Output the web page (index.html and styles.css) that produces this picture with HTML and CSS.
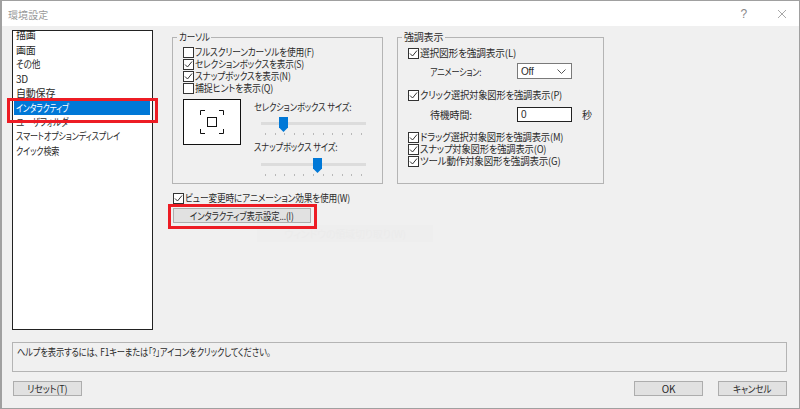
FILE: index.html
```html
<!DOCTYPE html>
<html lang="ja">
<head>
<meta charset="utf-8">
<title>環境設定</title>
<link rel="stylesheet" href="styles.css">
</head>
<body>
<div class="window">
  <header class="titlebar">
    <span class="title">環境設定</span>
    <span class="help-q">?</span>
    <svg class="close" width="10" height="10" viewBox="0 0 10 10"><path d="M1 1L9 9M9 1L1 9" stroke="#a8a8a8" fill="none"/></svg>
  </header>
  <div class="body">
    <div class="main">
      <ul class="list">
        <li class="item first">描画</li>
        <li class="item">画面</li>
        <li class="item"><span class="t sx86">その他</span></li>
        <li class="item">3D</li>
        <li class="item">自動保存</li>
        <li class="item selected"><span class="t sx78">インタラクティブ</span></li>
        <li class="item"><span class="t sx84">ユーザフォルダ</span></li>
        <li class="item"><span class="t sx81">スマートオプションディスプレイ</span></li>
        <li class="item"><span class="t sx81">クイック検索</span></li>
      </ul>
      <div class="pane">
        <div class="groups">
          <section class="group group-cursor">
            <div class="legend"><span class="t sx86">カーソル</span></div>
            <div class="checks">
              <label class="check"><span class="box"></span><span class="t sx87">フルスクリーンカーソルを使用(F)</span></label>
              <label class="check"><span class="box on"><svg width="9" height="9" viewBox="0 0 9 9"><path d="M1 4.5L3.5 7L8 1.5" fill="none" stroke="#333"/></svg></span><span class="t sx86">セレクションボックスを表示(S)</span></label>
              <label class="check"><span class="box on"><svg width="9" height="9" viewBox="0 0 9 9"><path d="M1 4.5L3.5 7L8 1.5" fill="none" stroke="#333"/></svg></span><span class="t sx86">スナップボックスを表示(N)</span></label>
              <label class="check"><span class="box"></span><span class="t sx90">捕捉ヒントを表示(Q)</span></label>
            </div>
            <div class="cursor-row">
              <div class="preview">
                <svg width="24" height="24" viewBox="0 0 24 24"><path d="M.5 5V.5H5M19 .5H23.500V5M.5 19V23.500H5M19 23.500H23.500V19" fill="none" stroke="#111"/><rect x="7.5" y="7.5" width="9" height="9" fill="none" stroke="#111"/></svg>
              </div>
              <div class="sliders">
                <div class="slider-label"><span class="t sx83">セレクションボックス サイズ:</span></div>
                <div class="slider">
                  <div class="track"></div>
                  <svg class="thumb thumb-a" width="9" height="15" viewBox="0 0 9 15"><path d="M0 0H9V10.500L4.500 15L0 10.500Z" fill="#0078d7"/></svg>
                  <div class="ticks"><i></i><i></i><i></i><i></i><i></i><i></i><i></i><i></i><i></i><i></i><i></i></div>
                </div>
                <div class="slider-label second"><span class="t sx83">スナップボックス サイズ:</span></div>
                <div class="slider slider-second">
                  <div class="track"></div>
                  <svg class="thumb thumb-b" width="9" height="15" viewBox="0 0 9 15"><path d="M0 0H9V10.500L4.500 15L0 10.500Z" fill="#0078d7"/></svg>
                  <div class="ticks"><i></i><i></i><i></i><i></i><i></i><i></i><i></i><i></i><i></i><i></i><i></i></div>
                </div>
              </div>
            </div>
          </section>
          <section class="group group-emph">
            <div class="legend">強調表示</div>
            <label class="check c1"><span class="box on"><svg width="9" height="9" viewBox="0 0 9 9"><path d="M1 4.5L3.5 7L8 1.5" fill="none" stroke="#333"/></svg></span><span class="t sx97">選択図形を強調表示(L)</span></label>
            <div class="field f-anim">
              <span class="field-label"><span class="t sx81">アニメーション:</span></span>
              <span class="select">Off<svg width="9" height="5" viewBox="0 0 9 5"><path d="M.5 .5L4.500 4.500L8.500 .5" fill="none" stroke="#555"/></svg></span>
            </div>
            <label class="check c2"><span class="box on"><svg width="9" height="9" viewBox="0 0 9 9"><path d="M1 4.5L3.5 7L8 1.5" fill="none" stroke="#333"/></svg></span><span class="t sx93">クリック選択対象図形を強調表示(P)</span></label>
            <div class="field f-wait">
              <span class="field-label">待機時間:</span>
              <span class="input">0</span>
              <span class="unit">秒</span>
            </div>
            <label class="check c3"><span class="box on"><svg width="9" height="9" viewBox="0 0 9 9"><path d="M1 4.5L3.5 7L8 1.5" fill="none" stroke="#333"/></svg></span><span class="t sx93">ドラッグ選択対象図形を強調表示(M)</span></label>
            <label class="check"><span class="box on"><svg width="9" height="9" viewBox="0 0 9 9"><path d="M1 4.5L3.5 7L8 1.5" fill="none" stroke="#333"/></svg></span><span class="t sx93">スナップ対象図形を強調表示(O)</span></label>
            <label class="check"><span class="box on"><svg width="9" height="9" viewBox="0 0 9 9"><path d="M1 4.5L3.5 7L8 1.5" fill="none" stroke="#333"/></svg></span><span class="t sx95">ツール動作対象図形を強調表示(G)</span></label>
          </section>
        </div>
        <label class="check view-check"><span class="box on"><svg width="9" height="9" viewBox="0 0 9 9"><path d="M1 4.5L3.5 7L8 1.5" fill="none" stroke="#333"/></svg></span><span class="t sx87">ビュー変更時にアニメーション効果を使用(W)</span></label>
        <button class="btn wide"><span class="t mid sx84">インタラクティブ表示設定...(I)</span></button>
      </div>
    </div>
    <div class="helpbox"><span class="t sx83">ヘルプを表示するには、 F1キーまたは「?」アイコンをクリックしてください。</span></div>
    <footer class="footer">
      <button class="btn small"><span class="t mid sx90">リセット(T)</span></button>
      <span class="spacer"></span>
      <button class="btn small">OK</button>
      <button class="btn small"><span class="t mid sx86">キャンセル</span></button>
    </footer>
  </div>
  <div class="ghost">ウィンドウの領域切り取り(W)</div>
  <div class="mark mark-list"></div>
  <div class="mark mark-btn"></div>
</div>
</body>
</html>
```
FILE: styles.css
```css
* { box-sizing: border-box; }
html, body { margin: 0; padding: 0; }
body {
  width: 800px;
  height: 409px;
  overflow: hidden;
  font-family: "Noto Sans CJK JP", "Noto Sans", sans-serif;
  font-size: 10px;
  font-feature-settings: "palt";
  letter-spacing: -0.2px;
  color: #2a2a2a;
  background: #f0f0f0;
}
.t { display: inline-block; white-space: pre; transform-origin: left center; }
.t.mid { transform-origin: center; }
.sx78 { transform: scaleX(.78); }
.sx81 { transform: scaleX(.81); }
.sx83 { transform: scaleX(.83); }
.sx84 { transform: scaleX(.84); }
.sx86 { transform: scaleX(.86); }
.sx87 { transform: scaleX(.87); }
.sx90 { transform: scaleX(.90); }
.sx93 { transform: scaleX(.93); }
.sx95 { transform: scaleX(.95); }
.sx97 { transform: scaleX(.97); }
.window {
  position: relative;
  width: 800px;
  height: 409px;
  border: 1px solid #a0a0a0;
  border-width: 1px 1px 1px 2px;
  display: flex;
  flex-direction: column;
  background: #f0f0f0;
}
.titlebar {
  height: 25px;
  background: #fff;
  display: flex;
  align-items: center;
  padding: 0 9px 0 6px;
  flex: none;
}
.title { font-size: 10px; color: #999; flex: 1; letter-spacing: 0.1px; margin-top: 1px; }
.help-q { font-family: "Liberation Sans", sans-serif; font-size: 12px; color: #888; margin-right: 30px; }
.close { display: block; margin-right: 3px; }
.body { flex: 1; display: flex; flex-direction: column; padding: 4px 12px 0 10px; }
.main { display: flex; height: 300px; flex: none; }
.list {
  list-style: none;
  margin: 0;
  padding: 0 2px 0 1px;
  width: 141px;
  height: 300px;
  border: 1px solid #222;
  background: #fff;
  overflow: hidden;
  flex: none;
}
.item { height: 14.500px; line-height: 14.500px; padding-left: 2px; }
.item.first { margin-top: -3px; }
.item.selected { background: #0078d7; color: #fff; height: 14px; line-height: 14px; }
.pane { margin-left: 19px; position: relative; flex: 1; }
.groups { display: flex; gap: 14px; margin-top: 7px; }
.group { height: 147px; border: 1px solid #b4b4b4; flex: none; }
.group-cursor { width: 211px; padding-left: 10px; }
.group-emph { width: 207px; padding-left: 10px; }
.legend {
  width: fit-content;
  margin: -8px 0 0 -6px;
  padding: 0 2px;
  height: 14px;
  line-height: 14px;
  background: #f0f0f0;
}
.group-cursor .legend { width: 34px; }
.checks { margin-top: 2px; }
.check { display: flex; align-items: center; height: 12px; line-height: 12px; white-space: nowrap; }
.box {
  width: 11px;
  height: 11px;
  border: 1px solid #333;
  background: #fff;
  margin-right: 1px;
  flex: none;
  display: flex;
  align-items: center;
  justify-content: center;
}
.cursor-row { display: flex; margin-top: 5px; }
.preview {
  width: 58px;
  height: 46px;
  border: 1px solid #111;
  background: #fff;
  display: flex;
  align-items: center;
  justify-content: center;
}
.sliders { margin-left: 13px; }
.slider-label { height: 14px; line-height: 14px; margin-top: 1px; white-space: nowrap; }
.slider-label.second { margin-top: 3px; }
.slider { position: relative; width: 105px; height: 20px; margin: 3px 0 0 7px; }
.slider-second { margin-top: 4px; }
.track { height: 3px; background: #dcdcdc; position: relative; top: 5px; }
.thumb { position: absolute; top: 0; display: block; }
.thumb-a { left: 18px; }
.thumb-b { left: 52px; }
.ticks { display: flex; justify-content: space-between; padding: 0 4px; position: relative; top: 13px; }
.ticks i { display: block; width: 1px; height: 2px; background: #b8b8b8; }
.c1 { margin-top: 3px; }
.field { display: flex; align-items: center; }
.field-label { width: 109px; padding-left: 22px; white-space: nowrap; flex: none; }
.f-anim { margin-top: 4px; height: 16px; }
.select {
  width: 55px;
  height: 16px;
  border: 1px solid #7a7a7a;
  background: #fff;
  display: flex;
  align-items: center;
  justify-content: space-between;
  padding: 0 5px 0 3px;
  font-family: "Liberation Sans", sans-serif;
  font-size: 10px;
  flex: none;
}
.c2 { margin-top: 10px; }
.f-wait { margin-top: 6px; height: 14px; }
.input {
  width: 55px;
  height: 15px;
  border: 1px solid #222;
  background: #fff;
  line-height: 13px;
  padding-left: 3px;
  font-family: "Liberation Sans", sans-serif;
  flex: none;
}
.unit { margin-left: 10px; }
.c3 { margin-top: 10px; }
.view-check { margin: 8px 0 0 1px; }
.btn {
  display: block;
  font: inherit;
  letter-spacing: inherit;
  color: inherit;
  height: 15px;
  line-height: 13px;
  padding: 0;
  background: #e1e1e1;
  border: 1px solid #adadad;
  white-space: nowrap;
}
.wide { width: 138px; margin: 4px 0 0 1px; }
.helpbox {
  width: 775px;
  height: 30px;
  margin-top: 12px;
  padding: 2px 0 0 4px;
  border: 1px solid #b4b4b4;
  line-height: 14px;
  flex: none;
}
.footer { display: flex; gap: 15px; margin-top: 9px; padding: 0 0 0 1px; width: 775px; }
.spacer { flex: 1; }
.small { width: 69px; }
.ghost {
  position: absolute;
  left: 255px;
  top: 224px;
  width: 176px;
  height: 17px;
  line-height: 17px;
  text-align: center;
  color: #ebebeb;
  background: #eeeeee;
}
.mark { position: absolute; border: 3px solid #ed1c24; }
.mark-list { left: 5px; top: 97px; width: 151px; height: 25px; }
.mark-btn { left: 166px; top: 203px; width: 149px; height: 25px; }
```
